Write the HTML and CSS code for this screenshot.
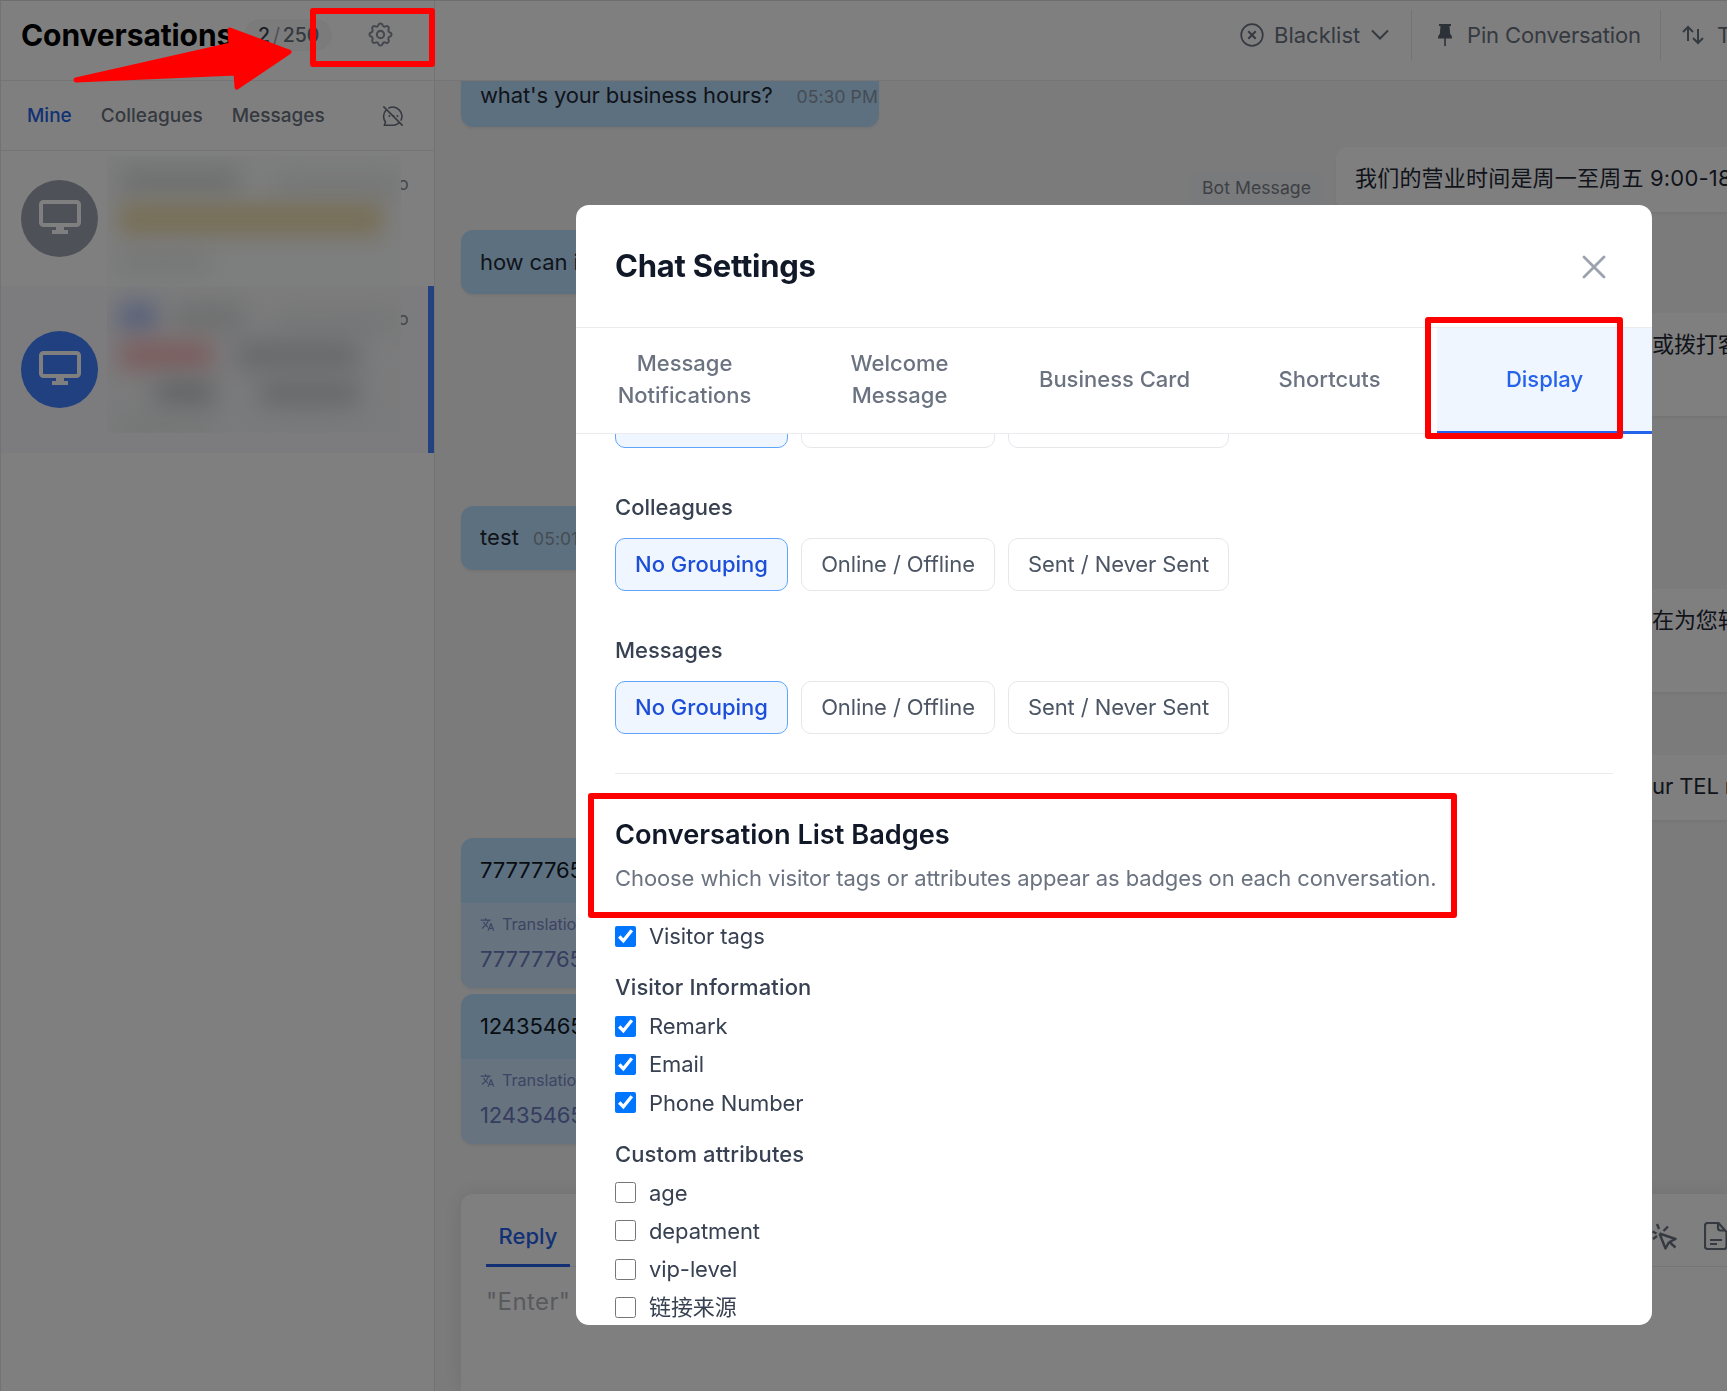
FILE: index.html
```html
<!DOCTYPE html>
<html lang="en">
<head>
    <meta charset="UTF-8">
    <meta name="viewport" content="width=device-width, initial-scale=1.0">
    <title>Conversations</title>
    <link rel="stylesheet" href="styles.css">
</head>
<body>

    <div class="app">
        <!-- Conversation list -->
        <aside class="sidebar">
            <header class="sidebar-header">
                <h1>Conversations</h1>
                <span class="count"><b>2</b><i>/</i>250</span>
                <svg class="gear" viewBox="0 0 24 24" fill="none" stroke="currentColor" stroke-width="1.7" stroke-linejoin="round">
                    <path d="M10.3 2.6c.5-1.8 2.9-1.8 3.4 0a1.8 1.8 0 0 0 2.6 1.1c1.6-.9 3.3.8 2.4 2.4a1.8 1.8 0 0 0 1.1 2.6c1.8.5 1.8 2.9 0 3.4a1.8 1.8 0 0 0-1.1 2.6c.9 1.6-.8 3.3-2.4 2.4a1.8 1.8 0 0 0-2.6 1.1c-.5 1.8-2.9 1.8-3.4 0a1.8 1.8 0 0 0-2.6-1.1c-1.6.9-3.3-.8-2.4-2.4a1.8 1.8 0 0 0-1.1-2.6c-1.8-.5-1.8-2.9 0-3.4a1.8 1.8 0 0 0 1.1-2.6c-.9-1.6.8-3.3 2.4-2.4a1.8 1.8 0 0 0 2.6-1.1z" transform="translate(0 1.6)"/>
                    <circle cx="12" cy="12" r="3"/>
                </svg>
            </header>
            <nav class="sidebar-tabs">
                <span class="active">Mine</span>
                <span>Colleagues</span>
                <span>Messages</span>
                <svg class="mute" viewBox="0 0 24 24" fill="none" stroke="currentColor" stroke-width="1.7" stroke-linecap="round" stroke-linejoin="round">
                    <path d="M7.5 3.3A10 10 0 0 1 20.8 16.5M18.2 19.8A10 10 0 0 1 12 22H2.5l1.3-3.5A10 10 0 0 1 4.5 5.5M2 2l20 20"/>
                    <path d="M12.5 12h.1M16.8 12h.1M8 12h.1" stroke-width="2"/>
                </svg>
            </nav>

            <div class="conversation">
                <div class="avatar">
                    <svg viewBox="0 0 42 36"><rect x="2" y="2" width="38" height="23" rx="2.5" fill="none" stroke="currentColor" stroke-width="4"/><path d="M17 26h8v4h4v4H13v-4h4z" fill="currentColor"/></svg>
                </div>
                <div class="preview">
                    <div class="smudge-row"><div class="smudge name"></div><div class="smudge ago"></div></div>
                    <div class="smudge notice"></div>
                    <div class="smudge line"></div>
                </div>
                <span class="time">o</span>
            </div>
            <div class="conversation selected">
                <div class="avatar">
                    <svg viewBox="0 0 42 36"><rect x="2" y="2" width="38" height="23" rx="2.5" fill="none" stroke="currentColor" stroke-width="4"/><path d="M17 26h8v4h4v4H13v-4h4z" fill="currentColor"/></svg>
                </div>
                <div class="preview">
                    <div class="smudge-row"><div class="smudge tag"></div><div class="smudge who"></div><div class="smudge ago"></div></div>
                    <div class="smudge-row"><div class="smudge draft"></div><div class="smudge body"></div></div>
                    <div class="smudge-row"><div class="smudge short"></div><div class="smudge rest"></div></div>
                    <div class="smudge line"></div>
                </div>
                <span class="time">o</span>
            </div>
        </aside>

        <!-- Chat -->
        <main class="chat">
            <header class="toolbar">
                <div class="tool">
                    <svg width="24" height="24" viewBox="0 0 24 24" fill="none" stroke="currentColor" stroke-width="1.7"><circle cx="12" cy="12" r="10.8"/><path d="M8.3 8.3l7.4 7.4M15.7 8.3l-7.4 7.4" stroke-width="2"/></svg>
                    <span class="blacklist">Blacklist</span>
                    <svg width="18" height="12" viewBox="0 0 18 12" fill="none" stroke="currentColor" stroke-width="2"><path d="M1 1.5l8 8 8-8"/></svg>
                </div>
                <div class="tool pin">
                    <svg width="14" height="23" viewBox="0 0 14 23" fill="currentColor"><path d="M1 0h12v2h-1.5l.7 8c1 .8 1.8 2 1.8 4.5H7.8V22H6.2v-7.5H0C0 12 .8 10.8 1.8 10l.7-8H1z"/></svg>
                    <span>Pin Conversation</span>
                </div>
                <div class="tool transfer">
                    <svg width="22" height="20" viewBox="0 0 22 20" fill="none" stroke="currentColor" stroke-width="2"><path d="M6 16V2M1 7l5-5 5 5M16 4v14M11 13l5 5 5-5"/></svg>
                    <span>T</span>
                </div>
            </header>

            <section class="messages">
                <div class="row first"><div class="bubble">what's your business hours?<time>05:30 PM</time></div></div>
                <div class="row out hours"><span class="bot">Bot Message</span><div class="bubble">我们的营业时间是周一至周五 9:00-18</div></div>
                <div class="row"><div class="bubble help">how can i</div></div>
                <div class="row out tall"><div class="bubble">或拨打客</div></div>
                <div class="row test"><div class="bubble help">test<time>05:01</time></div></div>
                <div class="row out tall"><div class="bubble">在为您转</div></div>
                <div class="row out tel"><div class="bubble">ur TEL n</div></div>
                <div class="row">
                    <div class="bubble translated">
                        <p>77777765</p>
                        <div class="translation">
                            <small><svg width="15" height="15" viewBox="0 0 24 24" fill="currentColor"><path d="M12.9 15.1l-2.6-2.5a17.5 17.5 0 0 0 3.8-6.6H17V4h-7V2H8v2H1v2h11.2A15.7 15.7 0 0 1 9 11.4 15.6 15.6 0 0 1 6.7 8h-2a17.6 17.6 0 0 0 3 4.6l-5.1 5L4 19l5-5 3.1 3.1zM18.5 10h-2L12 22h2l1.1-3h4.8l1.1 3h2zm-2.6 7l1.6-4.3 1.6 4.3z"/></svg>Translatio</small>
                            <p>77777765</p>
                        </div>
                    </div>
                </div>
                <div class="row next">
                    <div class="bubble translated">
                        <p>12435465</p>
                        <div class="translation">
                            <small><svg width="15" height="15" viewBox="0 0 24 24" fill="currentColor"><path d="M12.9 15.1l-2.6-2.5a17.5 17.5 0 0 0 3.8-6.6H17V4h-7V2H8v2H1v2h11.2A15.7 15.7 0 0 1 9 11.4 15.6 15.6 0 0 1 6.7 8h-2a17.6 17.6 0 0 0 3 4.6l-5.1 5L4 19l5-5 3.1 3.1zM18.5 10h-2L12 22h2l1.1-3h4.8l1.1 3h2zm-2.6 7l1.6-4.3 1.6 4.3z"/></svg>Translatio</small>
                            <p>12435465</p>
                        </div>
                    </div>
                </div>
            </section>

            <section class="editor">
                <div class="editor-bar">
                    <span class="reply">Reply</span>
                    <div class="editor-icons">
                        <svg width="26" height="28" viewBox="0 0 26 28" fill="none" stroke="currentColor" stroke-width="2.4" stroke-linejoin="round"><path d="M8.5 11.5l16 5.5-6 3 6 5.5M8.5 11.5l6 15 3.5-6.5M6 2l2 5M17 4.5L12.5 9M1.5 9.5l4 2M6 14l-4 3"/></svg>
                        <svg width="24" height="28" viewBox="0 0 24 28" fill="none" stroke="currentColor" stroke-width="2.2" stroke-linejoin="round"><path d="M3.5 1h11l8 9v14.5A2.5 2.5 0 0 1 20 27H3.5A2.5 2.5 0 0 1 1 24.5v-21A2.5 2.5 0 0 1 3.5 1zM14 1v5a2.5 2.5 0 0 0 2.5 2.5H22M6 18h12M6 22h7"/></svg>
                    </div>
                </div>
                <p class="placeholder">"Enter"</p>
            </section>
        </main>
    </div>

    <div class="overlay"></div>

    <!-- Settings dialog -->
    <div class="modal">
        <header class="modal-header">
            <h2>Chat Settings</h2>
            <svg width="24" height="24" viewBox="0 0 24 24" fill="none" stroke="currentColor" stroke-width="2.8" stroke-linecap="round"><path d="M2 2l20 20M22 2L2 22"/></svg>
        </header>
        <nav class="modal-tabs">
            <span>Message Notifications</span>
            <span>Welcome Message</span>
            <span>Business Card</span>
            <span>Shortcuts</span>
            <span class="active">Display</span>
        </nav>
        <div class="modal-body">
            <div class="options scrolled">
                <div class="option one active"></div><div class="option two"></div><div class="option three"></div>
            </div>
            <h4>Colleagues</h4>
            <div class="options">
                <div class="option one active">No Grouping</div><div class="option two">Online / Offline</div><div class="option three">Sent / Never Sent</div>
            </div>
            <h4>Messages</h4>
            <div class="options">
                <div class="option one active">No Grouping</div><div class="option two">Online / Offline</div><div class="option three">Sent / Never Sent</div>
            </div>
            <div class="badges">
                <h3>Conversation List Badges</h3>
                <p>Choose which visitor tags or attributes appear as badges on each conversation.</p>
                <label><input type="checkbox" checked>Visitor tags</label>
                <h5>Visitor Information</h5>
                <label><input type="checkbox" checked>Remark</label>
                <label><input type="checkbox" checked>Email</label>
                <label><input type="checkbox" checked>Phone Number</label>
                <h5>Custom attributes</h5>
                <label><input type="checkbox">age</label>
                <label><input type="checkbox">depatment</label>
                <label><input type="checkbox">vip-level</label>
                <label><input type="checkbox">链接来源</label>
            </div>
        </div>
    </div>

    <!-- Red callouts -->
    <div class="mark mark-gear"></div>
    <div class="mark mark-display"></div>
    <div class="mark mark-badges"></div>
    <svg class="arrow" width="230" height="72" viewBox="0 0 230 72"><path d="M6 60L161 25 160 10 219 32 167 67 166 53z" fill="#f00" stroke="#f00" stroke-width="5" stroke-linejoin="round"/></svg>

</body>
</html>
```
FILE: styles.css
```css
* {
    box-sizing: border-box;
}

body, h1, h2, h3, h4, h5, p {
    margin: 0;
}

svg {
    flex-shrink: 0;
}

body {
    height: 1391px;
    overflow: hidden;
    font-family: Inter, "Noto Sans CJK SC", sans-serif;
    font-size: 22px;
    letter-spacing: -0.1px;
    color: #1f2937;
    background: #fff;
}

.app {
    display: flex;
    width: 1727px;
    height: 1391px;
    overflow: hidden;
    border-top: 1px solid #dcdcdc;
}

/* sidebar */
.sidebar {
    width: 435px;
    flex-shrink: 0;
    border-left: 1px solid #e5e7eb;
    border-right: 1px solid #e5e7eb;
    background: #fff;
}

.sidebar-header {
    display: flex;
    align-items: center;
    height: 80px;
    padding: 0 0 12px 20px;
    border-bottom: 1px solid #e9eaec;
}

.sidebar-header h1 {
    width: 223px;
    font-size: 30px;
    font-weight: 700;
    letter-spacing: -0.1px;
    color: #000;
    white-space: nowrap;
}

.count {
    width: 88px;
    height: 32px;
    padding-left: 14px;
    border-radius: 16px;
    background: #f6f7f9;
    font-size: 19.5px;
    font-weight: 500;
    line-height: 32px;
    color: #6b7280;
}

.count b {
    font-weight: 500;
    color: #374151;
}

.count i {
    margin: 0 3px;
    font-style: normal;
    font-weight: 400;
    color: #9ca3af;
}

.gear {
    width: 29px;
    height: 29px;
    margin-left: 34px;
    color: #8a909c;
}

.sidebar-tabs {
    display: flex;
    align-items: center;
    gap: 29px;
    height: 70px;
    padding: 0 30px 0 26px;
    border-bottom: 1px solid #e9eaec;
    font-size: 19px;
    font-weight: 500;
    letter-spacing: 0.02px;
    color: #6b7280;
}

.sidebar-tabs .active {
    color: #2563eb;
}

.mute {
    width: 22px;
    height: 22px;
    margin-left: auto;
}

.conversation {
    display: flex;
    height: 135px;
    padding: 29px 0 0 20px;
}

.conversation.selected {
    height: 167px;
    padding-top: 45px;
    border-right: 6px solid #4285ff;
    background: #f8f9fd;
}

.avatar {
    display: flex;
    align-items: center;
    justify-content: center;
    flex-shrink: 0;
    width: 77px;
    height: 77px;
    border-radius: 50%;
    background: #9ca3af;
    color: #fff;
}

.avatar svg {
    width: 42px;
    height: 36px;
    margin-bottom: 2px;
}

.selected .avatar {
    background: #4080ff;
}

.preview {
    flex-shrink: 0;
    width: 294px;
    height: 130px;
    margin: -24px 0 0 9px;
    padding: 11px 0 0 12px;
    overflow: hidden;
    background: #fbfcfc;
}

.selected .preview {
    height: 147px;
    margin-top: -45px;
    padding-top: 17px;
    background: linear-gradient(#f9f9fb, #f5f6f8);
}

.smudge {
    height: 28px;
    border-radius: 8px;
    background: #dcdfdf;
    filter: blur(12px);
}

.smudge-row {
    display: flex;
    margin-bottom: 10px;
}

.smudge.name {
    width: 134px;
}

.smudge.ago {
    width: 140px;
    height: 20px;
    margin: 8px 0 0 32px;
    background: #e8eaeb;
}

.smudge.notice {
    width: 264px;
    height: 34px;
    margin: -3px 0 16px;
    background: #efdfb2;
    filter: blur(10px);
}

.smudge.line {
    width: 90px;
    height: 18px;
    background: #e8e9e9;
}

.smudge.tag {
    width: 42px;
    height: 28px;
    background: #aabcf4;
}

.smudge.who {
    width: 80px;
    margin-left: 16px;
}

.selected .smudge.ago {
    margin-left: 28px;
}

.smudge.draft {
    width: 94px;
    height: 28px;
    background: #f7b6b8;
}

.smudge.body {
    width: 124px;
    margin-left: 22px;
    background: #cdd1d6;
}

.smudge.short {
    width: 60px;
    margin-left: 36px;
    background: #c6cacd;
}

.smudge.rest {
    width: 100px;
    margin-left: 44px;
    background: #cdd1d6;
}

.time {
    margin: -7px 0 0 -3px;
    font-size: 18px;
    color: #8a909b;
    clip-path: inset(0 0 0 3px);
}

.selected .time {
    margin-top: -23px;
}

/* chat */
.chat {
    display: flex;
    flex-direction: column;
    flex: 1;
    min-width: 0;
    background: #f7f7f7;
}

.toolbar {
    display: flex;
    justify-content: flex-end;
    align-items: flex-start;
    flex-shrink: 0;
    height: 80px;
    padding-top: 9px;
    border-bottom: 1px solid #ebebeb;
    background: #fff;
    letter-spacing: -0.15px;
    color: #6b7280;
    white-space: nowrap;
}

.tool {
    display: flex;
    align-items: center;
    gap: 10px;
    width: 171px;
    height: 50px;
}

.blacklist {
    width: 87px;
    letter-spacing: 0;
}

.tool.pin {
    gap: 15px;
    width: 249px;
    padding-left: 26px;
    border-left: 1px solid #e5e7eb;
}

.tool.transfer {
    gap: 13px;
    width: 67px;
    padding-left: 21px;
    border-left: 1px solid #e5e7eb;
}

.tool.pin svg {
    color: #5b6270;
}

.messages {
    flex-shrink: 0;
    height: 1113px;
    padding-left: 26px;
    overflow: hidden;
}

.row {
    display: flex;
    margin-top: 18px;
    line-height: 28px;
    white-space: nowrap;
}

.row.first {
    margin-top: -17px;
}

.row.test {
    margin-top: 90px;
}

.row.next {
    margin-top: 6px;
}

.bubble {
    height: 64px;
    padding: 18px 0 0 19px;
    border-radius: 12px;
    background: #bae0ff;
    box-shadow: 0 2px 3px rgba(0, 0, 0, 0.06);
}

.first .bubble {
    width: 418px;
    height: 63px;
    padding-top: 17px;
    letter-spacing: -0.15px;
}

.bubble.help {
    width: 150px;
    letter-spacing: -0.1px;
}

.test .bubble {
    padding-top: 17px;
    letter-spacing: 0.1px;
}

.bubble time {
    margin-left: 24px;
    font-size: 17.5px;
    letter-spacing: 0.1px;
    color: #8b99a8;
}

.help time {
    margin-left: 14px;
}

.out {
    margin-top: 20px;
    padding-left: 1168px;
}

.out .bubble {
    height: 65px;
    padding: 17px 0 0 23px;
    background: #fff;
    width: 400px;
    flex-shrink: 0;
}

.out.hours {
    gap: 13px;
    padding-left: 728px;
}

.hours .bubble {
    padding-left: 19px;
    letter-spacing: 0.2px;
}

.out.tall {
    margin-top: 19px;
}

.out.tall .bubble {
    height: 103px;
}

.out.tel {
    margin-top: 63px;
}

.bot {
    flex-shrink: 0;
    width: 134px;
    height: 33px;
    margin-top: 25px;
    padding-left: 13px;
    border-radius: 6px;
    background: #f3f4f6;
    font-size: 17.6px;
    letter-spacing: 0.05px;
    line-height: 32px;
    color: #7b818c;
}

.bubble.translated {
    width: 260px;
    height: 150px;
    padding: 0;
    overflow: hidden;
    color: #111827;
}

.translated > p {
    height: 65px;
    padding: 18px 0 0 19px;
}

.translation {
    height: 85px;
    padding: 7px 0 0 19px;
    background: #cfe6ff;
    color: #6a7ac0;
}

.translation small {
    display: flex;
    align-items: center;
    gap: 7px;
    font-size: 16.3px;
    color: #7a8ac8;
}

.translation p {
    margin-top: 7px;
}

.editor {
    flex: 1;
    margin-left: 26px;
    border-radius: 12px 0 0 0;
    background: #fff;
    box-shadow: 0 0 20px rgba(30, 50, 80, 0.12);
}

.editor-bar {
    display: flex;
    justify-content: space-between;
    height: 73px;
    margin-left: 25px;
    border-bottom: 1px solid #e9eaee;
}

.reply {
    width: 84px;
    height: 73px;
    padding-top: 28px;
    border-bottom: 3px solid #2563eb;
    font-weight: 500;
    letter-spacing: 0;
    line-height: 28px;
    text-align: center;
    color: #2563eb;
}

.editor-icons {
    display: flex;
    align-items: center;
    gap: 27px;
    padding-top: 11px;
    color: #6b7280;
}

.editor-icons svg:last-child {
    margin-right: -1px;
}

.placeholder {
    margin: 20px 0 0 25px;
    font-size: 24px;
    letter-spacing: 0.4px;
    line-height: 30px;
    color: #b0b4bc;
}

.overlay {
    position: fixed;
    inset: 0;
    background: rgba(0, 0, 0, 0.5);
}

/* settings dialog */
.modal {
    position: absolute;
    left: 576px;
    top: 205px;
    display: flex;
    flex-direction: column;
    width: 1076px;
    height: 1120px;
    border-radius: 13px;
    background: #fff;
    overflow: hidden;
    color: #374151;
}

.modal-header {
    display: flex;
    justify-content: space-between;
    align-items: center;
    flex-shrink: 0;
    height: 123px;
    padding: 0 46px 0 39px;
    border-bottom: 1px solid #ebecef;
    color: #9ca3af;
}

.modal-header h2 {
    margin-bottom: 2px;
    font-size: 31px;
    font-weight: 700;
    letter-spacing: -0.25px;
    color: #111827;
}

.modal-header svg {
    margin-top: 1px;
}

.modal-tabs {
    display: flex;
    flex-shrink: 0;
    height: 106px;
    padding-left: 1px;
    border-bottom: 1px solid #ebecef;
    font-weight: 500;
    letter-spacing: 0;
    line-height: 32px;
    text-align: center;
    color: #6b7280;
}

.modal-tabs span {
    display: flex;
    align-items: center;
    justify-content: center;
    width: 215px;
    padding: 0 30px 3px;
}

.modal-tabs .active {
    height: 106px;
    padding-bottom: 1px;
    border-bottom: 3px solid #2563eb;
    background: #eff6ff;
    color: #2563eb;
}

.modal-body {
    flex: 1;
    padding: 0 39px;
    overflow: hidden;
}

.options {
    display: flex;
    gap: 13px;
}

.options.scrolled {
    margin-top: -39px;
}

.option {
    height: 53px;
    border: 1px solid #e5e7eb;
    border-radius: 10px;
    line-height: 51px;
    text-align: center;
    color: #4b5563;
    white-space: nowrap;
}

.option.one {
    width: 173px;
}

.option.two {
    width: 194px;
}

.option.three {
    width: 221px;
}

.option.active {
    border-color: #60a5fa;
    background: #eff6ff;
    font-weight: 500;
    letter-spacing: 0;
    color: #1d4ed8;
}

.modal-body h4 {
    height: 90px;
    padding-top: 43px;
    font-size: 22px;
    font-weight: 500;
    letter-spacing: 0;
    line-height: 32px;
}

.badges {
    margin-top: 39px;
    border-top: 1px solid #ebecef;
}

.badges h3 {
    margin-top: 42px;
    font-size: 27.2px;
    font-weight: 600;
    line-height: 38px;
    letter-spacing: 0;
    color: #111827;
}

.badges p {
    margin: 8px 0 26px;
    line-height: 32px;
    color: #6b7280;
    white-space: nowrap;
}

.badges label {
    display: flex;
    align-items: center;
    gap: 13px;
    height: 32px;
    margin-bottom: 6.3px;
    line-height: 32px;
}

.badges input {
    width: 21px;
    height: 21px;
    margin: 0;
}

.badges h5 {
    margin: 19px 0 7px;
    font-size: 22px;
    font-weight: 500;
    letter-spacing: 0.12px;
    line-height: 32px;
}

/* callouts */
.mark {
    position: absolute;
    border: 6px solid #f00;
    border-radius: 3px;
}

.mark-gear {
    left: 310px;
    top: 8px;
    width: 125px;
    height: 59px;
}

.mark-display {
    left: 1425px;
    top: 317px;
    width: 198px;
    height: 122px;
}

.mark-badges {
    left: 588px;
    top: 793px;
    width: 869px;
    height: 125px;
}

.arrow {
    position: absolute;
    left: 70px;
    top: 20px;
}
```
